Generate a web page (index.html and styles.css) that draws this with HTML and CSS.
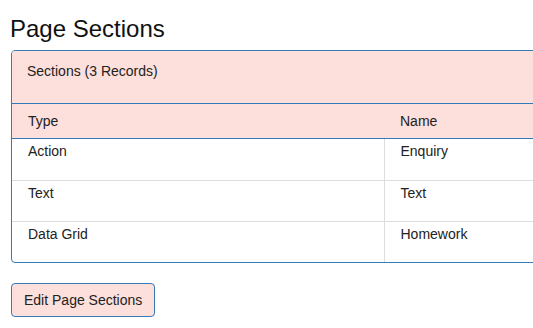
FILE: index.html
```html
<!DOCTYPE html>
<html lang="en">
<head>
<meta charset="UTF-8">
<title>Page Sections</title>
<link rel="stylesheet" href="styles.css">
</head>
<body>

<div class="page">
<h1 class="title">Page Sections</h1>

<div class="panel">
  <div class="panel-head">Sections (3 Records)</div>
  <table class="grid">
    <colgroup><col class="col-type"><col></colgroup>
    <thead>
      <tr><th>Type</th><th>Name</th></tr>
    </thead>
    <tbody>
      <tr><td>Action</td><td>Enquiry</td></tr>
      <tr><td>Text</td><td>Text</td></tr>
      <tr><td>Data Grid</td><td>Homework</td></tr>
    </tbody>
  </table>
</div>

<button class="btn">Edit Page Sections</button>
</div>

</body>
</html>
```

FILE: styles.css
```css
html,body{margin:0;background:#fff;overflow:hidden}
body{font-family:"Liberation Sans",Arial,sans-serif;font-size:14px;color:#222}
.page{padding:15px 0 0 11px}
.title{margin:0 0 8px -1px;font-size:24px;font-weight:normal;line-height:27px;color:#111}
.panel{width:758px;border:1px solid #337ab7;border-radius:4px;overflow:hidden;margin-bottom:20px}
.panel-head{background:#fddfdb;padding:10px 15px 22px;line-height:20px;border-bottom:1px solid #337ab7}
.grid{width:100%;border-collapse:collapse;table-layout:fixed}
.col-type{width:372px}
.grid th{background:#fddfdb;text-align:left;font-weight:normal;padding:8px 16px;line-height:18px;border-bottom:1px solid #337ab7}
.grid td{padding:3px 16px 19px;line-height:18px;border-top:1px solid #ddd;vertical-align:top}
.grid tbody tr:first-child td{border-top:none;padding-bottom:20px}
.grid td+td{border-left:1px solid #ddd}
.btn{font-family:inherit;font-size:14px;color:#222;background:#fddfdb;border:1px solid #337ab7;border-radius:4px;padding:6px 12px;line-height:20px;cursor:pointer}
```
